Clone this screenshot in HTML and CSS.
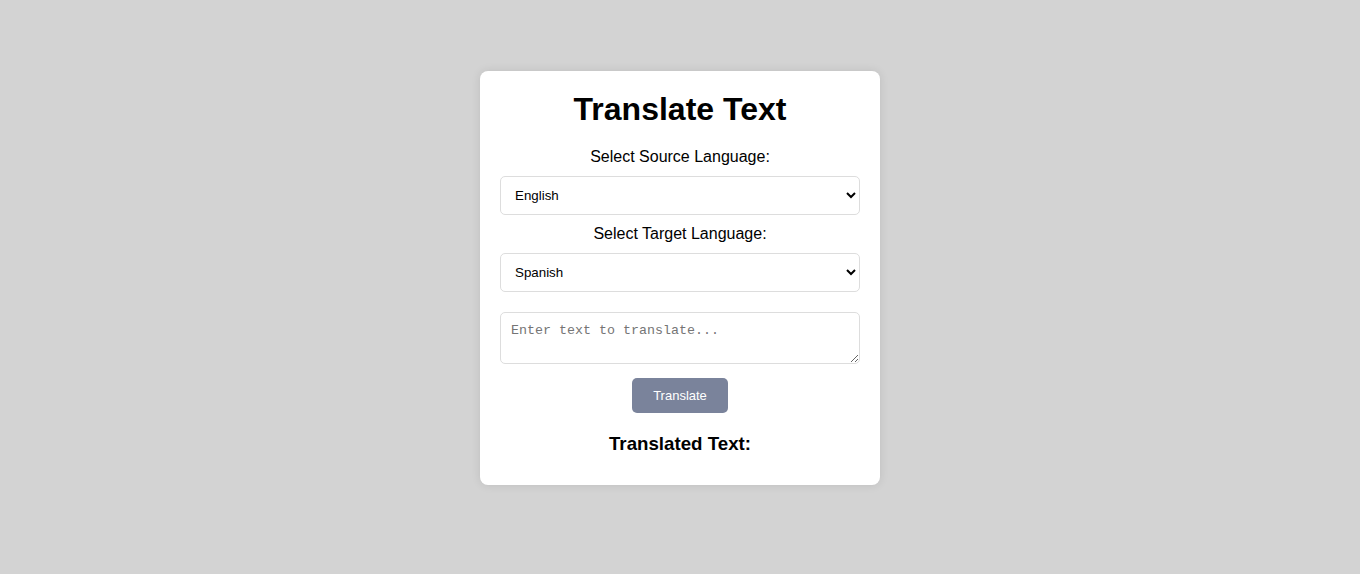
FILE: index.html
```html
<!DOCTYPE html>
<html>
<head>
<meta charset="utf-8">
<link rel="stylesheet" href="styles.css">
</head>
<body>
<div class="card">
  <h1 class="title">Translate Text</h1>
  <label class="label" for="src">Select Source Language:</label>
  <select id="src" class="select">
    <option>English</option>
  </select>
  <label class="label" for="tgt">Select Target Language:</label>
  <select id="tgt" class="select">
    <option>Spanish</option>
  </select>
  <textarea class="input" placeholder="Enter text to translate..."></textarea>
  <div class="actions"><button class="btn">Translate</button></div>
  <h3 class="result-title">Translated Text:</h3>
</div>
</body>
</html>
```
FILE: styles.css
```css
html, body {
  margin: 0;
  padding: 0;
}
body {
  background: #d3d3d3;
  font-family: "Liberation Sans", Arial, sans-serif;
  padding-top: 71px;
  min-height: 574px;
  box-sizing: border-box;
}
.card {
  width: 400px;
  box-sizing: border-box;
  margin: 0 auto;
  background: #fff;
  border-radius: 8px;
  padding: 20px 20px 20px;
  box-shadow: 0 0 10px rgba(0, 0, 0, 0.1);
  display: flex;
  flex-direction: column;
  align-items: stretch;
  text-align: center;
  height: 414px;
}
.title {
  font-size: 32px;
  font-weight: bold;
  line-height: 37px;
  margin: 0 0 20px;
  color: #000;
}
.label {
  display: block;
  font-size: 16px;
  line-height: 18px;
  margin: 0 0 10px;
  color: #000;
}
.select {
  display: block;
  width: 100%;
  height: 39px;
  box-sizing: border-box;
  padding: 0 10px;
  font-family: "Liberation Sans", Arial, sans-serif;
  font-size: 13.33px;
  border: 1px solid #ddd;
  border-radius: 5px;
  background: #fff;
  color: #000;
  margin: 0 0 10px;
}
.input {
  display: block;
  width: 100%;
  height: 52px;
  box-sizing: border-box;
  margin: 10px 0 14px;
  padding: 10px;
  border: 1px solid #ddd;
  border-radius: 5px;
  font-family: "Liberation Mono", monospace;
  font-size: 13.33px;
  resize: vertical;
}
.input::placeholder {
  color: #757575;
}
.actions {
  display: flex;
  justify-content: center;
}
.btn {
  width: 96px;
  height: 35px;
  border: none;
  border-radius: 5px;
  background: #7a839b;
  color: #fff;
  font-family: "Liberation Sans", Arial, sans-serif;
  font-size: 13px;
  padding: 0;
}
.result-title {
  font-size: 18.72px;
  line-height: 22px;
  font-weight: bold;
  margin: 20px 0 0;
  color: #000;
}
```
